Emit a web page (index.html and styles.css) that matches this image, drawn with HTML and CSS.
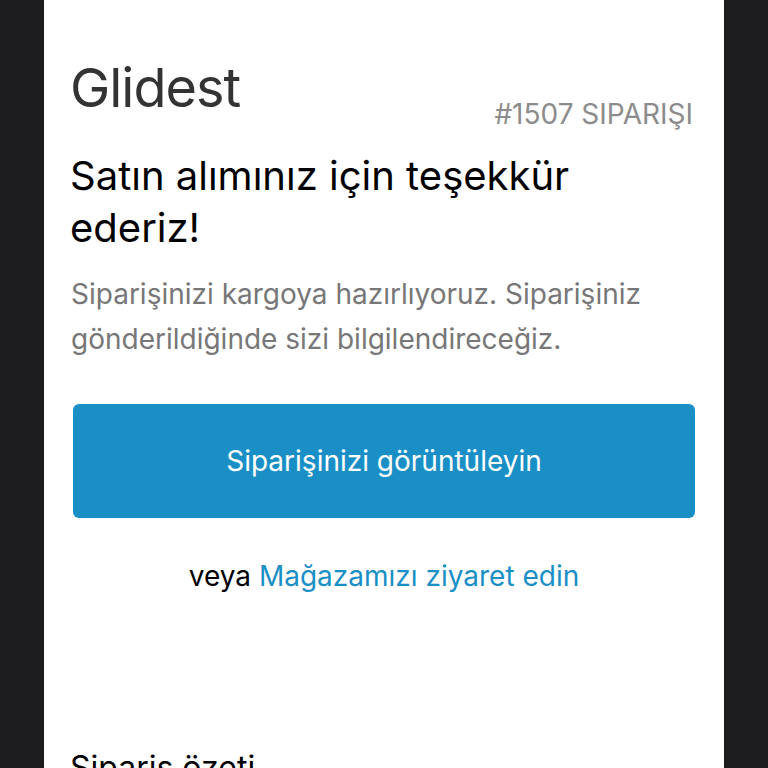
FILE: index.html
```html
<!DOCTYPE html>
<html lang="tr">
<head>
    <meta charset="utf-8">
    <title>Glidest - Sipariş onayı</title>
    <link rel="stylesheet" href="styles.css">
</head>
<body>
    <div class="page">
        <div class="header">
            <div class="shop-name">Glidest</div>
            <div class="order-number">#1507 SIPARIŞI</div>
        </div>

        <h1 class="title">Satın alımınız için teşekkür ederiz!</h1>
        <p class="intro">Siparişinizi kargoya hazırlıyoruz. Siparişiniz gönderildiğinde sizi bilgilendireceğiz.</p>

        <a class="button" href="#">Siparişinizi görüntüleyin</a>

        <p class="alt-link">veya <a href="#">Mağazamızı ziyaret edin</a></p>

        <h2 class="section-title">Sipariş özeti</h2>
    </div>
</body>
</html>
```

FILE: styles.css
```css
body {
    margin: 0;
    background-color: #1d1d1f;
    font-family: Inter, "Noto Sans", sans-serif;
}
.page {
    width: 624px;
    margin: 0 44px;
    padding: 56px 28px 40px;
    background-color: #fff;
    min-height: 800px;
}
.header {
    display: flex;
    justify-content: space-between;
    align-items: flex-end;
}
.shop-name {
    font-size: 54px;
    line-height: 64px;
    color: #333;
    letter-spacing: -1px;
    margin-left: -2px;
}
.order-number {
    font-size: 28px;
    line-height: 30px;
    color: #8c8c8c;
    margin-bottom: -9px;
    margin-right: 3px;
}
.title {
    margin: 30px 0 0 -2px;
    font-size: 40px;
    line-height: 52px;
    font-weight: 400;
    color: #000;
}
.intro {
    margin: 18px 0 0 -1px;
    font-size: 28px;
    line-height: 45px;
    color: #777;
}
.button {
    display: flex;
    align-items: center;
    justify-content: center;
    height: 114px;
    margin: 42px 1px 0;
    background-color: #1a8fc6;
    border-radius: 6px;
    color: #fff;
    font-size: 28px;
    text-decoration: none;
}
.alt-link {
    margin: 38px 0 0;
    text-align: center;
    font-size: 28px;
    line-height: 40px;
    color: #000;
}
.alt-link a {
    color: #1a8fc6;
    text-decoration: none;
}
.section-title {
    margin: 152px 0 0 -2px;
    font-size: 32px;
    font-weight: 400;
    color: #000;
}
```
